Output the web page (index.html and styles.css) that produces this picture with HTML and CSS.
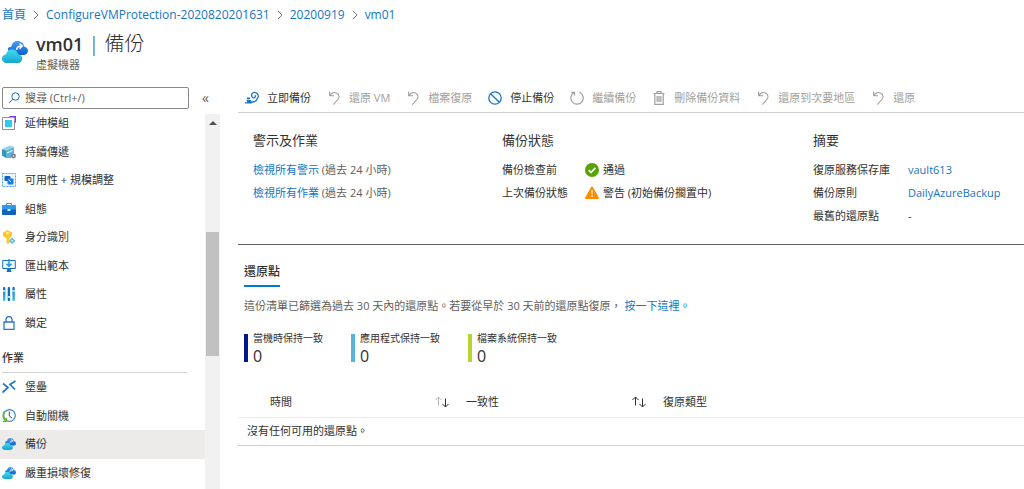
FILE: index.html
```html
<!DOCTYPE html>
<html lang="zh-Hant">

<head>
    <meta charset="UTF-8">
    <meta name="viewport" content="width=device-width, initial-scale=1.0">
    <title>vm01 | 備份</title>
    <link rel="stylesheet" href="styles.css">
</head>

<body>
    <!-- shared icons -->
    <svg class="sprite" aria-hidden="true">
        <defs>
            <linearGradient id="cloud-front" x1="0" y1="0" x2="0" y2="1">
                <stop offset="0" stop-color="#3fdcf2" />
                <stop offset="1" stop-color="#1aa5cf" />
            </linearGradient>
            <linearGradient id="cloud-back" x1="0" y1="0" x2="0" y2="1">
                <stop offset="0" stop-color="#4a9bf5" />
                <stop offset="1" stop-color="#0b62cc" />
            </linearGradient>
            <linearGradient id="bar-blue" x1="0" y1="0" x2="0" y2="1">
                <stop offset="0" stop-color="#0f6cbd" />
                <stop offset="1" stop-color="#32c5ee" />
            </linearGradient>
        </defs>
        <symbol id="icon-backup" viewBox="0 0 26 24">
            <path fill="url(#cloud-back)" d="M12 15C8 14 5.500 11 6 8 7.500 6.500 8.800 6.800 9.300 6.400 10 3 12.500 1 15.500 1c3.500 0 6 2.300 6.500 5.400 2.300.4 4 2 4 4.200 0 2.500-1.800 4.400-4 4.400z" />
            <path fill="url(#cloud-front)" d="M5 23c-2.800 0-5-1.800-5-4.300 0-2.200 1.600-3.900 3.900-4.100C4.500 11.700 7 9.500 10 9.500c3 0 5.400 1.900 6 4.700 2.500.1 4.300 1.900 4.300 4.300 0 2.600-2 4.500-4.600 4.500z" />
            <path fill="none" stroke="#fff" stroke-width="1.500" d="M14.500 9.800c.3-2.300 2-3.800 5.500-3.800M17.500 3.500 20.200 6l-2.600 2.800" />
        </symbol>
        <symbol id="icon-undo" viewBox="0 0 14 16">
            <path fill="none" stroke="currentColor" stroke-width="1.200" d="M2 .5v5h5M2.200 5.300C4 2.300 7 1.200 9.700 2.200c3.300 1.400 3.900 5 1.700 7.500L6.300 15.500" />
        </symbol>
    </svg>

    <header class="page-header">
        <nav class="breadcrumb">
            <a href="#">首頁</a>
            <svg class="sep" viewBox="0 0 6 10"><path d="M1 1l4 4-4 4" /></svg>
            <a href="#">ConfigureVMProtection-2020820201631</a>
            <svg class="sep" viewBox="0 0 6 10"><path d="M1 1l4 4-4 4" /></svg>
            <a href="#">20200919</a>
            <svg class="sep" viewBox="0 0 6 10"><path d="M1 1l4 4-4 4" /></svg>
            <a href="#">vm01</a>
        </nav>
        <div class="title-row">
            <svg class="title-icon"><use href="#icon-backup" /></svg>
            <div>
                <h1><b>vm01</b> | 備份</h1>
                <p class="subtitle">虛擬機器</p>
            </div>
        </div>
    </header>

    <div class="layout">
        <aside class="sidebar">
            <div class="search-row">
                <label class="search">
                    <svg viewBox="0 0 12 12"><circle cx="7.500" cy="4.500" r="3.700" /><path d="M4.800 7.200 1 11" /></svg>
                    <input type="text" placeholder="搜尋 (Ctrl+/)" aria-label="搜尋">
                </label>
                <button class="collapse" type="button">«</button>
            </div>
            <div class="menu-area">
                <nav class="menu">
                    <a href="#">
                        <svg viewBox="0 0 14 14"><path fill="#fff" stroke="#8c9096" d="M8 1.500H.5v12h12V6" /><path fill="#32c8f0" d="M3 4h7v7H3z" /><path fill="none" stroke="#773adc" stroke-width="1.600" d="M7.500.8h5.700v5.700" /></svg>
                        延伸模組
                    </a>
                    <a href="#">
                        <svg viewBox="0 0 14 14"><path fill="#8fd3ee" d="M0 4 7.500.5 12 2 4 5.500z" /><path fill="#3596bd" d="M0 4l4 1.500V13L0 10.500z" /><path fill="#5bb4d8" d="M4 5.500 12 2v6l-3 5H4z" /><path fill="#fff" d="M5 7.500 10.500 5v1L5 8.500z" /><circle cx="11.500" cy="11" r="2.400" fill="#7a7f85" /><circle cx="11.500" cy="11" r=".8" fill="#fff" /></svg>
                        持續傳遞
                    </a>
                    <a href="#">
                        <svg viewBox="0 0 14 14"><path fill="#eaf5fd" stroke="#59a7e3" stroke-dasharray="2 1" d="M.5.5h13v13H.5z" /><rect x="2.500" y="3" width="6" height="5" rx="1" fill="#0b62c4" /><rect x="5.500" y="5.500" width="6" height="6" rx="1" fill="#1b7de0" /><path fill="none" stroke="#fff" d="M6.500 6.500 9 9" /></svg>
                        可用性 + 規模調整
                    </a>
                    <a href="#">
                        <svg viewBox="0 0 14 14"><path fill="none" stroke="#4b8fc9" d="M4.500 3V1.500h5V3" /><rect y="3" width="14" height="5" rx="1" fill="#2d9bea" /><path fill="#0f63b8" d="M0 7.500h14V12a1 1 0 0 1-1 1H1a1 1 0 0 1-1-1z" /><path fill="#cdeafb" d="M5.500 7h3v2h-3z" /></svg>
                        組態
                    </a>
                    <a href="#">
                        <svg viewBox="0 0 14 14"><path fill="#fdc82f" d="M5.500 0 10 2.500v4L7.500 8v5L6 14l-1.500-1.500V8L1 6.500v-4z" /><circle cx="5.500" cy="3" r="1.200" fill="#fff2b3" /><path fill="#64b8dc" d="M10 7.500 13.500 11 10 14 7 11z" /><circle cx="10.200" cy="10.800" r="1" fill="#c5edff" /></svg>
                        身分識別
                    </a>
                    <a href="#">
                        <svg viewBox="0 0 14 14"><path fill="#f2faff" stroke="#1671bd" d="M.7 1.500h12.600v8H.7z" /><path fill="#1671bd" d="M5.500 9.500h3L9.500 13h-5z" /><path fill="none" stroke="#1d97e4" stroke-width="1.500" d="M7 0v7M4.500 4.700 7 7.200l2.500-2.500" /></svg>
                        匯出範本
                    </a>
                    <a href="#">
                        <svg viewBox="0 0 14 14"><rect x="1" width="2.400" height="14" rx="1" fill="url(#bar-blue)" /><rect x="5.700" width="2.400" height="14" rx="1" fill="#0f6cbd" /><rect x="10.400" width="2.400" height="14" rx="1" fill="url(#bar-blue)" /><path fill="#a9e7fa" d="M1 3h2.400v2H1zM5.700 9h2.400v2H5.700zM10.400 3h2.400v2h-2.400z" /></svg>
                        屬性
                    </a>
                    <a href="#">
                        <svg viewBox="0 0 14 14"><path fill="none" stroke="#2f74cf" stroke-width="1.300" d="M2 6h10v7.300H2zM4 6V3.500a3 3 0 0 1 6 0V6" /></svg>
                        鎖定
                    </a>
                    <h2>作業</h2>
                    <a href="#">
                        <svg viewBox="0 0 14 14"><path fill="none" stroke="#1f78c8" stroke-width="1.700" d="M1 3.500l5 4L.5 12.500M13.500 1 8 4.500l5 5" /></svg>
                        堡壘
                    </a>
                    <a href="#">
                        <svg viewBox="0 0 14 14"><circle cx="7.500" cy="6.500" r="5.800" fill="#fff" stroke="#3b86c8" stroke-width="1.200" /><path fill="none" stroke="#67b92e" stroke-width="1.600" d="M3 2C.3 4.800.5 9 3.500 11.500M1 12.500l3.500-.5-.5-3" /><path fill="none" stroke="#3c4a57" d="M7.300 2.500V7l2.700 2" /></svg>
                        自動關機
                    </a>
                    <a href="#" class="active">
                        <svg><use href="#icon-backup" /></svg>
                        備份
                    </a>
                    <a href="#">
                        <svg><use href="#icon-backup" /></svg>
                        嚴重損壞修復
                    </a>
                </nav>
                <div class="scrollbar">
                    <svg viewBox="0 0 8 4"><path fill="#505050" d="M0 4l4-4 4 4z" /></svg>
                    <div class="thumb"></div>
                </div>
            </div>
        </aside>

        <main class="content">
            <div class="toolbar">
                <button type="button">
                    <svg class="blue" viewBox="0 0 15 14"><path fill="none" stroke="currentColor" stroke-width="1.400" d="M7 3.500C7.500 1.700 9.500.7 11.300 1.200c2.400.6 3.400 3.300 2.500 5.600-1 2.700-3.400 4.400-6.300 4.700M7 3.500c-.1 2 1.200 3.700 2.900 3.300 1.300-.3 1.500-1.900.6-2.700" /><path fill="currentColor" d="M2 6.500h3.500V8H2zM1.500 9h4l2.500 2.500-1 1.500H0v-1.500h2.500z" /></svg>
                    立即備份
                </button>
                <button type="button" disabled><svg><use href="#icon-undo" /></svg>還原 VM</button>
                <button type="button" disabled><svg><use href="#icon-undo" /></svg>檔案復原</button>
                <button type="button">
                    <svg class="blue" viewBox="0 0 14 14"><circle cx="7" cy="7" r="6.200" fill="none" stroke="currentColor" stroke-width="1.300" /><path stroke="currentColor" stroke-width="1.300" d="M2.700 2.700l8.600 8.600" /></svg>
                    停止備份
                </button>
                <button type="button" disabled>
                    <svg viewBox="0 0 14 14"><path fill="none" stroke="currentColor" stroke-width="1.200" d="M9.500 1.300A6.200 6.200 0 1 1 4 1.600M4.500 4.500V1.300H1.300" /></svg>
                    繼續備份
                </button>
                <button type="button" disabled>
                    <svg viewBox="0 0 14 14"><path fill="none" stroke="currentColor" stroke-width="1.200" d="M1.500 2.500h11M5 2.500V.6h4v1.900M2.800 2.500v10.900h8.400V2.500M5.200 5v6M7 5v6M8.800 5v6" /></svg>
                    刪除備份資料
                </button>
                <button type="button" disabled><svg><use href="#icon-undo" /></svg>還原到次要地區</button>
                <button type="button" disabled><svg><use href="#icon-undo" /></svg>還原</button>
            </div>

            <section class="essentials">
                <div>
                    <h3>警示及作業</h3>
                    <p><a href="#">檢視所有警示</a> <span class="muted">(過去 24 小時)</span></p>
                    <p><a href="#">檢視所有作業</a> <span class="muted">(過去 24 小時)</span></p>
                </div>
                <div>
                    <h3>備份狀態</h3>
                    <dl class="status">
                        <dt>備份檢查前</dt>
                        <dd>
                            <svg viewBox="0 0 14 14"><circle cx="7" cy="7" r="7" fill="#57a300" /><path fill="none" stroke="#fff" stroke-width="1.700" d="M3.700 7.200 6 9.500l4.400-4.700" /></svg>
                            通過
                        </dd>
                        <dt>上次備份狀態</dt>
                        <dd>
                            <svg viewBox="0 0 14 14"><path fill="#ff8c00" d="M7 .5a1 1 0 0 1 .9.5l6 10.800a.9.900 0 0 1-.8 1.200H.9a.9.900 0 0 1-.8-1.200L6.100 1A1 1 0 0 1 7 .5z" /><path fill="#fff" d="M6.300 4h1.400l-.2 4.500h-1zM6.300 9.500h1.400v1.400H6.300z" /></svg>
                            警告 (初始備份擱置中)
                        </dd>
                    </dl>
                </div>
                <div>
                    <h3>摘要</h3>
                    <dl class="summary">
                        <dt>復原服務保存庫</dt>
                        <dd><a href="#">vault613</a></dd>
                        <dt>備份原則</dt>
                        <dd><a href="#">DailyAzureBackup</a></dd>
                        <dt>最舊的還原點</dt>
                        <dd>-</dd>
                    </dl>
                </div>
            </section>

            <section class="restore">
                <h3 class="tab">還原點</h3>
                <p class="note">這份清單已篩選為過去 30 天內的還原點。若要從早於 30 天前的還原點復原， <a href="#">按一下這裡。</a></p>
                <div class="stats">
                    <div class="stat crash"><span>當機時保持一致</span><strong>0</strong></div>
                    <div class="stat app"><span>應用程式保持一致</span><strong>0</strong></div>
                    <div class="stat file"><span>檔案系統保持一致</span><strong>0</strong></div>
                </div>
            </section>

            <table class="points">
                <thead>
                    <tr>
                        <th class="time">
                            <div>時間
                                <svg viewBox="0 0 14 12"><path stroke="#b5b5b5" d="M3.500 9.500V1M.5 4l3-3 3 3" /><path d="M10.500 2.500V11M7.500 8l3 3 3-3" /></svg>
                            </div>
                        </th>
                        <th class="kind">
                            <div>一致性
                                <svg viewBox="0 0 14 12"><path d="M3.500 9.500V1M.5 4l3-3 3 3" /><path d="M10.500 2.500V11M7.500 8l3 3 3-3" /></svg>
                            </div>
                        </th>
                        <th>復原類型</th>
                    </tr>
                </thead>
                <tbody>
                    <tr>
                        <td colspan="3">沒有任何可用的還原點。</td>
                    </tr>
                </tbody>
            </table>
        </main>
    </div>
</body>

</html>
```

FILE: styles.css
```css
* {
    box-sizing: border-box;
}

body {
    display: flex;
    flex-direction: column;
    min-height: 100vh;
    margin: 0;
    font-family: "Open Sans", "Noto Sans CJK TC", sans-serif;
    font-size: 11px;
    line-height: 16px;
    color: #323130;
    background-color: #fff;
}

h1, h2, h3, p, dl, dd {
    margin: 0;
    font-weight: normal;
}

a {
    color: #1475c4;
    text-decoration: none;
}

a:hover {
    text-decoration: underline;
}

button {
    padding: 0;
    border: 0;
    background: none;
    font: inherit;
    color: inherit;
}

svg {
    flex: none;
}

.sprite {
    position: absolute;
    width: 0;
    height: 0;
}

/* header */
.page-header {
    padding: 7px 2px 0;
}

.breadcrumb {
    display: flex;
    align-items: center;
    gap: 7px;
    font-size: 12px;
}

.sep {
    width: 6px;
    height: 10px;
    fill: none;
    stroke: #767676;
}

.title-row {
    display: flex;
    gap: 8px;
    padding-top: 8px;
}

.title-icon {
    width: 26px;
    height: 24px;
    margin-top: 9px;
}

h1 {
    font-size: 20px;
    line-height: 26px;
    font-weight: 300;
}

h1 b {
    font-size: 18px;
    font-weight: 600;
}

.subtitle {
    color: #605e5c;
}

/* layout */
.layout {
    display: flex;
    flex: 1;
    padding-top: 14px;
}

.sidebar {
    display: flex;
    flex-direction: column;
    flex: none;
    width: 220px;
}

.search-row {
    display: flex;
    gap: 13px;
    padding-left: 2px;
}

.search {
    display: flex;
    align-items: center;
    gap: 5px;
    width: 187px;
    height: 22px;
    padding: 0 5px;
    border: 1px solid #8a8886;
    border-radius: 2px;
}

.search svg {
    width: 12px;
    height: 12px;
    fill: none;
    stroke: #1475c4;
}

.search input {
    flex: 1;
    min-width: 0;
    padding: 0;
    border: 0;
    outline: 0;
    font: inherit;
}

.search input::placeholder {
    color: #605e5c;
}

.collapse {
    font-size: 14px;
    color: #605e5c;
}

.menu-area {
    display: flex;
    flex: 1;
}

.menu {
    display: flex;
    flex-direction: column;
    flex: 1;
    padding-bottom: 2px;
}

.menu a {
    display: flex;
    align-items: center;
    gap: 9px;
    flex: 1 0 28px;
    padding-left: 2px;
    color: #323130;
}

.menu a.active {
    background-color: #edebe9;
}

.menu svg {
    width: 14px;
    height: 14px;
}

.menu h2 {
    margin: 5px 18px 0 2px;
    padding: 8px 0 6px;
    border-bottom: 1px solid #d2d0ce;
    font-size: 11px;
    line-height: 16px;
    font-weight: 500;
}

.scrollbar {
    display: flex;
    flex-direction: column;
    align-items: center;
    width: 15px;
    margin-top: 5px;
    background-color: #f1f1f1;
}

.scrollbar svg {
    width: 8px;
    height: 4px;
    margin-top: 7px;
}

.scrollbar::before,
.scrollbar::after {
    content: "";
    flex: 107;
    order: 1;
}

.scrollbar::after {
    flex: 133;
    order: 3;
}

.thumb {
    flex: 124;
    order: 2;
    width: 13px;
    background-color: #c1c1c1;
}

/* content */
.content {
    flex: 1;
    min-width: 0;
    padding-left: 18px;
}

.toolbar {
    display: flex;
    gap: 16px;
    height: 26px;
    padding: 0 0 4px 7px;
    border-bottom: 1px solid #d2d0ce;
}

.toolbar button {
    display: flex;
    align-items: center;
    gap: 8px;
    white-space: nowrap;
}

.toolbar button:disabled {
    color: #a19f9d;
}

.toolbar svg {
    width: 14px;
    height: 14px;
}

.toolbar .blue {
    color: #1475c4;
}

.essentials {
    display: grid;
    grid-template-columns: 249px 311px 1fr;
    padding: 17px 0 17px 15px;
    border-bottom: 1px solid #605e5c;
    line-height: 23px;
}

.essentials h3 {
    margin-bottom: 8px;
    font-size: 13px;
    line-height: 20px;
}

.muted {
    color: #605e5c;
}

.status,
.summary {
    display: grid;
    grid-template-columns: 83px 1fr;
}

.summary {
    grid-template-columns: 95px 1fr;
}

dd {
    display: flex;
    align-items: center;
    gap: 4px;
}

dd svg {
    width: 14px;
    height: 14px;
}

.restore {
    padding: 18px 0 0 6px;
}

.tab {
    display: inline-block;
    padding-bottom: 4px;
    border-bottom: 2px solid #0078d4;
    font-size: 12px;
    line-height: 18px;
    font-weight: 500;
}

.note {
    margin-top: 11px;
    color: #605e5c;
}

.stats {
    display: flex;
    gap: 28px;
    margin-top: 20px;
}

.stat {
    display: flex;
    flex-direction: column;
    justify-content: space-between;
    height: 28px;
    padding-left: 5px;
    border-left: 4px solid #00188f;
}

.stat span {
    font-size: 10px;
    line-height: 8px;
}

.stat strong {
    font-size: 16px;
    line-height: 12px;
    font-weight: normal;
}

.stat.app {
    border-color: #59b4d9;
}

.stat.file {
    border-color: #b8d432;
}

.points {
    width: 100%;
    margin-top: 25px;
    border-collapse: collapse;
    table-layout: fixed;
}

.points th {
    height: 30px;
    padding: 0 0 0 12px;
    border-bottom: 1px solid #edebe9;
    font-weight: normal;
    text-align: left;
}

.points .time {
    width: 216px;
    padding-left: 32px;
}

.points .kind {
    width: 197px;
}

.points th div {
    display: flex;
    align-items: center;
    justify-content: space-between;
    padding-right: 5px;
}

.points th svg {
    width: 14px;
    height: 12px;
    fill: none;
    stroke: #323130;
}

.points td {
    height: 28px;
    padding: 0 9px;
    border-bottom: 1px solid #d2d0ce;
}
```
